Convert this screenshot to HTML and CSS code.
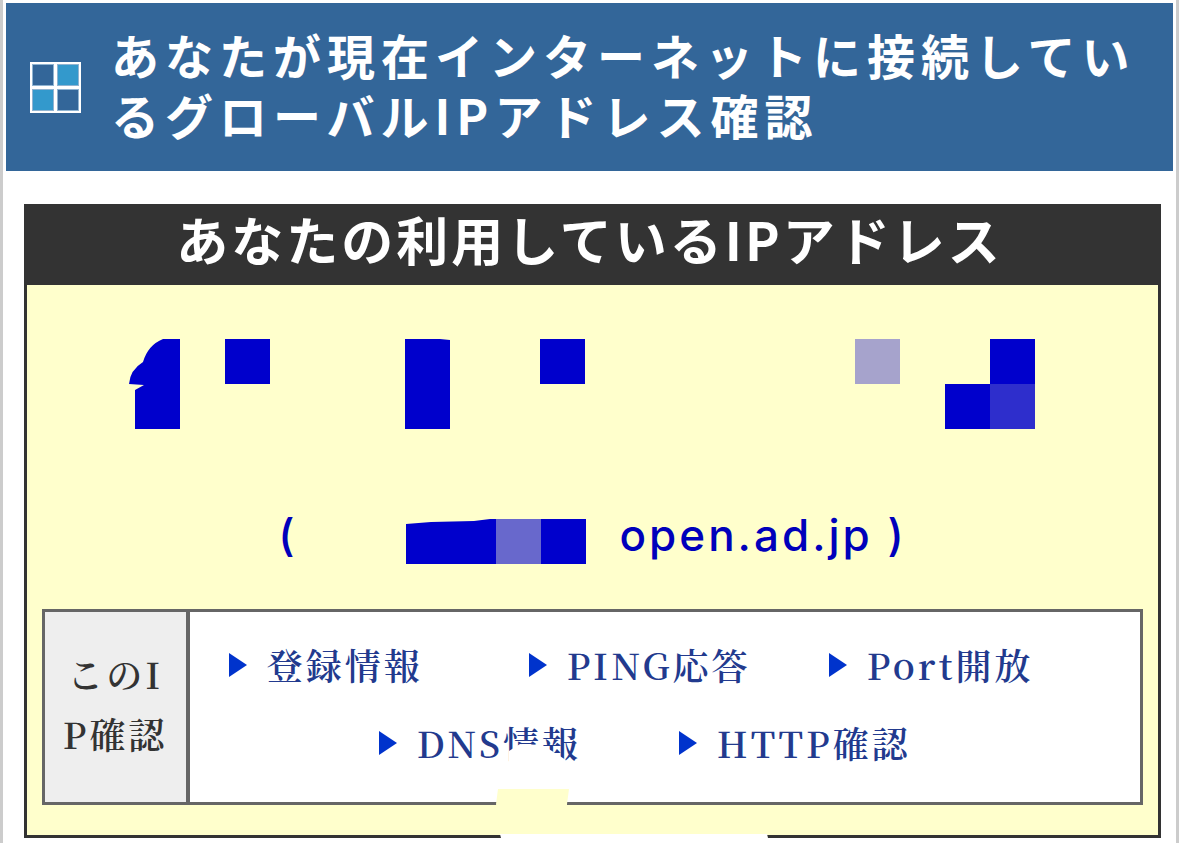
FILE: index.html
```
<!DOCTYPE html>
<html lang="ja">
<head>
  <meta charset="UTF-8">
  <meta name="viewport" content="width=device-width, initial-scale=1">
  <title>グローバルIPアドレス確認</title>
  <link rel="stylesheet" href="styles.css">
</head>
<body>
  <div class="page">
    <header class="site-header">
      <svg class="logo" viewBox="0 0 51 51" aria-hidden="true">
        <rect width="51" height="51" fill="#fff"/>
        <g stroke="#8fb4d2" stroke-width="1">
          <rect x="2.5" y="2.5" width="21" height="21" fill="#336699"/>
          <rect x="27.5" y="2.5" width="21" height="21" fill="#3399cc"/>
          <rect x="2.5" y="27.5" width="21" height="21" fill="#3399cc"/>
          <rect x="27.5" y="27.5" width="21" height="21" fill="#336699"/>
        </g>
      </svg>
      <h1>あなたが現在インターネットに接続しているグローバルIPアドレス確認</h1>
    </header>

    <main class="ip-box">
      <h2>あなたの利用しているIPアドレス</h2>

      <!-- masked address -->
      <svg class="ip-mask" viewBox="0 0 928 90" aria-hidden="true">
        <g fill="#0000cc">
          <path d="M51 0H34Q19 6 14 23Q1 31 0 45L15 46L6 51V90H51Z"/>
          <path d="M96 0h45v45H96zM276 0h35l10 1v89h-45zM411 0h45v45h-45zM861 0h45v45h-45zM816 45h45v45h-45z"/>
        </g>
        <path fill="#a6a3cc" d="M726 0h45v45h-45z"/>
        <path fill="#2e2ecc" d="M861 45h45v45h-45z"/>
      </svg>

      <p class="host">
        <span>(</span>
        <svg class="host-mask" viewBox="0 0 180 45" aria-hidden="true">
          <path fill="#0000cc" d="M0 5L25 3L68 2L84 0H90V45H0ZM135 0h45v45h-45z"/>
          <path fill="#6868cc" d="M90 0h45v45H90z"/>
        </svg>
        <span>open.ad.jp )</span>
      </p>

      <table class="check">
        <tr>
          <th scope="row">このIP確認</th>
          <td>
            <ul class="links">
              <li><a href="#whois">登録情報</a></li>
              <li><a href="#ping">PING応答</a></li>
              <li><a href="#port">Port開放</a></li>
              <li><a href="#dns">DNS情報</a></li>
              <li><a href="#http">HTTP確認</a></li>
            </ul>
          </td>
        </tr>
      </table>

      <svg class="smudge" viewBox="0 0 272 98" aria-hidden="true">
        <path fill="#fff" d="M13 11L24 4L46 5L56 11L70 20L66 28H13Z"/>
        <path fill="#ffffcc" d="M2 49H73L71 64V94H4L0 64Z"/>
        <path fill="#fff" d="M4 94H271L272 98H5Z"/>
      </svg>
    </main>
  </div>
</body>
</html>
```
FILE: styles.css
```
* {
  box-sizing: border-box;
}

body {
  margin: 0;
  background: #fff;
  color: #333;
  font-family: "Noto Sans CJK JP", sans-serif;
}

.page {
  min-height: 100vh;
  padding: 3px 3px 5px;
  border-left: 3px solid #ccc;
  border-right: 3px solid #ccc;
}

.site-header {
  display: flex;
  align-items: center;
  gap: 30px;
  padding: 21px 24px;
  background: #336699;
  color: #fff;
}

.logo {
  flex: none;
  width: 51px;
  height: 51px;
}

h1 {
  margin: 0;
  padding-bottom: 6px;
  font-size: 48px;
  font-weight: 600;
  line-height: 60px;
  letter-spacing: 6px;
}

.ip-box {
  position: relative;
  margin: 33px 12px 0 18px;
  padding-bottom: 30px;
  border: 3px solid #333;
  background: #ffffcc;
}

h2 {
  margin: 0;
  padding: 0 6px 14px 0;
  background: #333;
  color: #fff;
  font-size: 52px;
  font-weight: 600;
  line-height: 64px;
  letter-spacing: 3px;
  text-align: center;
}

.ip-mask {
  display: block;
  width: 928px;
  height: 90px;
  margin: 54px auto 90px;
}

.host {
  display: flex;
  justify-content: center;
  margin: 0 0 45px;
  color: #0000bb;
  font-family: Inter, sans-serif;
  font-size: 44px;
  font-weight: 500;
  line-height: 32px;
  letter-spacing: 3px;
}

.host-mask {
  width: 180px;
  height: 45px;
  margin: 0 34px 0 108px;
}

.check {
  width: calc(100% - 30px);
  margin: 0 15px;
  border-collapse: collapse;
  font-family: "Noto Serif CJK JP", "Noto Sans CJK JP", serif;
  font-size: 36px;
  letter-spacing: 3px;
}

.check th,
.check td {
  border: 3px solid #666;
}

.check th {
  width: 144px;
  padding: 0 12px 6px;
  border-right-width: 4px;
  background: #eee;
  font-weight: 600;
  line-height: 60px;
  word-break: break-all;
}

.check td {
  padding: 14px 24px 20px;
  background: #fff;
}

.links {
  display: flex;
  flex-wrap: wrap;
  justify-content: center;
  margin: 0;
  padding: 0;
  list-style: none;
}

.links li {
  width: 300px;
  padding-left: 14px;
}

.links a {
  display: flex;
  align-items: center;
  gap: 20px;
  color: #223a8e;
  font-weight: 600;
  line-height: 78px;
  text-decoration: none;
}

.links a::before {
  content: "";
  border-left: 18px solid #0033cc;
  border-top: 12px solid transparent;
  border-bottom: 12px solid transparent;
}

/* rubbed-out patch over the lower edge of the box */
.smudge {
  position: absolute;
  left: 469px;
  bottom: -3px;
  width: 272px;
  height: 98px;
}
```
